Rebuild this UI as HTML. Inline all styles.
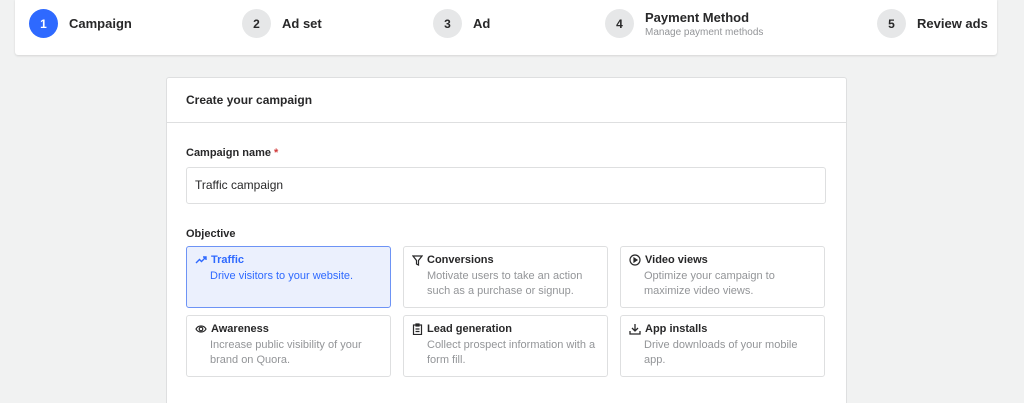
<!DOCTYPE html><html style="height:403px;overflow:hidden"><head><style>
body{margin:0;width:1024px;height:403px;background:#f1f2f2;font-family:"Liberation Sans",sans-serif;overflow:hidden;position:relative}
.top{position:absolute;left:15px;top:-2px;width:982px;height:57px;background:#fff;border-radius:3px;box-shadow:0 1px 2px rgba(0,0,0,.12)}
.st{position:absolute;top:11px;display:flex;align-items:center;font-weight:bold;font-size:13px;color:#282829}
.c{width:29px;height:29px;border-radius:50%;background:#e6e7e8;display:flex;align-items:center;justify-content:center;margin-right:11px;font-size:12px;color:#282829}
.card{position:absolute;left:166px;top:77px;width:679px;height:330px;background:#fff;border:1px solid #dedfe0;border-radius:3px}
.h{position:absolute;left:19px;top:15px;font-size:12px;font-weight:bold;color:#282829}
.sep{position:absolute;left:0;right:0;top:44px;border-top:1px solid #dedfe0}
.lbl{position:absolute;left:19px;font-size:11px;font-weight:bold;color:#282829}
.inp{position:absolute;left:19px;top:89px;border:1px solid #dedfe0;border-radius:3px;font-size:12px;color:#282829;line-height:35px;padding-left:8px;box-sizing:border-box;width:640px;height:37px}
.o{position:absolute;width:205px;height:62px;box-sizing:border-box;border:1px solid #dedfe0;border-radius:3px;padding:7px 8px}
.o b{font-size:11px;color:#282829;display:flex;align-items:center}
.o b svg{margin-right:4px}
.o p{margin:3px 0 0 15px;font-size:11px;line-height:15px;color:#939598}
.sel{background:#ebf0fd;border-color:#6d93f5}
.sel b{color:#2e69ff}.sel p{color:#2e69ff}
</style></head><body>
<div class="top">
<div class="st" style="left:14px"><div class="c" style="background:#2e69ff;color:#fff">1</div>Campaign</div>
<div class="st" style="left:227px"><div class="c">2</div>Ad set</div>
<div class="st" style="left:418px"><div class="c">3</div>Ad</div>
<div class="st" style="left:590px"><div class="c">4</div><div>Payment Method<div style="font-weight:normal;font-size:10px;color:#939598;margin-top:2px">Manage payment methods</div></div></div>
<div class="st" style="left:862px"><div class="c">5</div>Review ads</div>
</div>
<div class="card">
<div class="h">Create your campaign</div><div class="sep"></div>
<div class="lbl" style="top:69px">Campaign name <span style="color:#d13b3b">*</span></div>
<div class="inp">Traffic campaign</div>
<div class="lbl" style="top:150px">Objective</div>
<div class="o sel" style="left:19px;top:168px"><b><svg width="12" height="10" viewBox="0 0 12 10" fill="none" stroke="#2e69ff" stroke-width="1.4"><path d="M1 8l3.5-3.5 2 2L11 2M8 2h3v3"/></svg>Traffic</b><p>Drive visitors to your website.</p></div>
<div class="o" style="left:236px;top:168px"><b><svg width="11" height="11" viewBox="0 0 11 11" fill="none" stroke="#282829" stroke-width="1.2"><path d="M1 1h9L6.5 5.5V10L4.5 9V5.5z"/></svg>Conversions</b><p>Motivate users to take an action such as a purchase or signup.</p></div>
<div class="o" style="left:453px;top:168px"><b><svg width="12" height="12" viewBox="0 0 12 12" fill="none" stroke="#282829" stroke-width="1.2"><circle cx="6" cy="6" r="5"/><path d="M5 4v4l3-2z" fill="#282829"/></svg>Video views</b><p>Optimize your campaign to maximize video views.</p></div>
<div class="o" style="left:19px;top:237px"><b><svg width="12" height="10" viewBox="0 0 12 10" fill="none" stroke="#282829" stroke-width="1.2"><path d="M1 5c2-4 8-4 10 0-2 4-8 4-10 0z"/><circle cx="6" cy="5" r="1.8"/></svg>Awareness</b><p>Increase public visibility of your brand on Quora.</p></div>
<div class="o" style="left:236px;top:237px"><b><svg width="11" height="12" viewBox="0 0 11 12" fill="none" stroke="#282829" stroke-width="1.2"><rect x="1.5" y="2" width="8" height="9.5"/><path d="M4 1h3v2H4zM3.5 6h4M3.5 8.5h4"/></svg>Lead generation</b><p>Collect prospect information with a form fill.</p></div>
<div class="o" style="left:453px;top:237px"><b><svg width="12" height="12" viewBox="0 0 12 12" fill="none" stroke="#282829" stroke-width="1.3"><path d="M6 1v7M3 5l3 3 3-3M1 8v3h10V8"/></svg>App installs</b><p>Drive downloads of your mobile app.</p></div>
</div>
</body></html>
